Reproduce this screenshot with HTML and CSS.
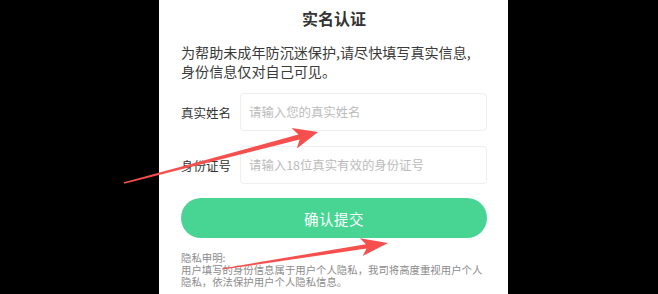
FILE: index.html
```html
<!DOCTYPE html>
<html lang="zh-CN">
<head>
<meta charset="utf-8">
<title>实名认证</title>
<link rel="stylesheet" href="styles.css">
</head>
<body>
<div class="page">
  <div class="card">
    <div class="title">实名认证</div>
    <p class="desc"><span class="line">为帮助未成年防沉迷保护,请尽快填写真实信息,</span><span class="line">身份信息仅对自己可见。</span></p>
    <div class="row">
      <label class="label">真实姓名</label>
      <div class="input"><span class="placeholder">请输入您的真实姓名</span></div>
    </div>
    <div class="row row-2">
      <label class="label">身份证号</label>
      <div class="input"><span class="placeholder">请输入18位真实有效的身份证号</span></div>
    </div>
    <button class="submit">确认提交</button>
    <div class="privacy">
      <span class="line">隐私申明:</span>
      <span class="line">用户填写的身份信息属于用户个人隐私，我司将高度重视用户个人</span>
      <span class="line">隐私，依法保护用户个人隐私信息。</span>
    </div>
  </div>
  <svg class="arrows" width="658" height="294" viewBox="0 0 658 294">
    <polygon class="arrow" points="123.8,182.3 298.4,134.6 291.5,128.1 318,132 296.9,148.5 299.6,139.4 124.2,183.7"/>
    <polygon class="arrow" points="222,268.4 365.9,244.2 359.9,238.2 388,243 362.7,256 366.5,248.6 222.2,269.6"/>
  </svg>
</div>
</body>
</html>
```
FILE: styles.css
```css
html, body {
  margin: 0;
  padding: 0;
  background: #000;
}
.page {
  position: relative;
  width: 658px;
  height: 294px;
  overflow: hidden;
  font-family: "Noto Sans CJK SC", "Noto Sans", sans-serif;
  color: #333;
}
.card {
  width: 349px;
  height: 294px;
  margin-left: 159px;
  background: #fff;
  box-sizing: border-box;
  padding: 8px 21px 0 22px;
}
.line {
  display: block;
  white-space: nowrap;
}
.title {
  font-size: 16px;
  font-weight: bold;
  line-height: 20px;
  text-align: center;
  color: #333;
}
.desc {
  margin: 14.5px 0 0;
  font-size: 14.1px;
  line-height: 19px;
  color: #3a3a3a;
}
.row {
  display: flex;
  align-items: center;
  margin-top: 12.5px;
}
.row-2 {
  margin-top: 15px;
}
.label {
  width: 59px;
  flex: none;
  font-size: 12.5px;
  color: #333;
}
.input {
  flex: 1;
  height: 38px;
  box-sizing: border-box;
  border: 1px solid #eeeeee;
  border-radius: 4px;
  display: flex;
  align-items: center;
  padding-left: 8px;
}
.placeholder {
  font-size: 12.4px;
  color: #bbbbbb;
}
.submit {
  display: block;
  width: 100%;
  height: 40px;
  margin-top: 14px;
  border: none;
  border-radius: 20px;
  background: #48d593;
  color: #fff;
  font-family: inherit;
  font-size: 14.5px;
  letter-spacing: 0.5px;
  padding: 0;
}
.privacy {
  margin-top: 14px;
  font-size: 10.4px;
  line-height: 12px;
  color: #8c8c8c;
}
.arrows {
  position: absolute;
  left: 0;
  top: 0;
  pointer-events: none;
}
.arrow {
  fill: #f5504e;
}
```
